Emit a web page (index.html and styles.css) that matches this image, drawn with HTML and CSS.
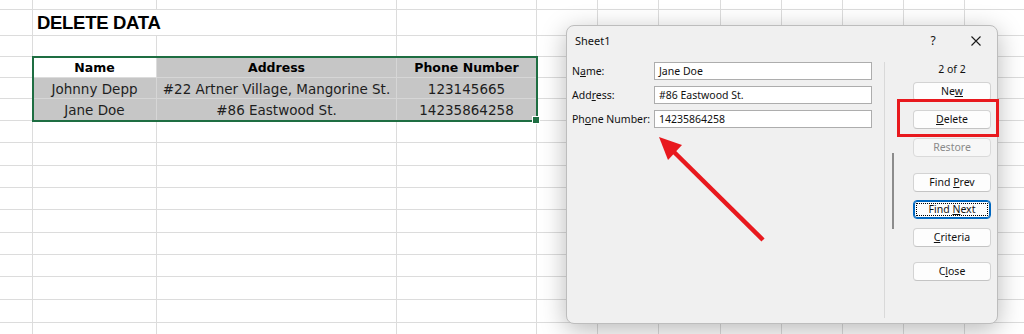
FILE: index.html
```html
<!DOCTYPE html>
<html lang="en">
<head>
<meta charset="utf-8">
<title>Delete Data</title>
<link rel="stylesheet" href="styles.css">
</head>
<body>
<div class="sheet">
  <div class="title">DELETE DATA</div>
  <div class="table">
    <div class="t active hd">Name</div><div class="t hd">Address</div><div class="t hd">Phone Number</div>
    <div class="t">Johnny Depp</div><div class="t">#22 Artner Village, Mangorine St.</div><div class="t">123145665</div>
    <div class="t">Jane Doe</div><div class="t">#86 Eastwood St.</div><div class="t">14235864258</div>
  </div>
  <!-- row 1 -->
  <span class="c"></span><span class="c"></span><span class="c"></span><span class="c"></span><span class="c"></span><span class="c"></span><span class="c"></span><span class="c"></span><span class="c"></span><span class="c"></span><span class="c"></span><span class="c"></span>
  <!-- row 2 -->
  <span class="c"></span><span class="c"></span><span class="c"></span><span class="c"></span><span class="c"></span><span class="c"></span><span class="c"></span><span class="c"></span><span class="c"></span><span class="c"></span>
  <!-- row 3 -->
  <span class="c"></span><span class="c"></span><span class="c"></span><span class="c"></span><span class="c"></span><span class="c"></span><span class="c"></span><span class="c"></span><span class="c"></span><span class="c"></span><span class="c"></span><span class="c"></span>
  <!-- rows 4-6 -->
  <span class="c"></span><span class="c"></span><span class="c"></span><span class="c"></span><span class="c"></span><span class="c"></span><span class="c"></span><span class="c"></span><span class="c"></span>
  <span class="c"></span><span class="c"></span><span class="c"></span><span class="c"></span><span class="c"></span><span class="c"></span><span class="c"></span><span class="c"></span><span class="c"></span>
  <span class="c"></span><span class="c"></span><span class="c"></span><span class="c"></span><span class="c"></span><span class="c"></span><span class="c"></span><span class="c"></span><span class="c"></span>
  <!-- rows 7-16 -->
  <span class="c"></span><span class="c"></span><span class="c"></span><span class="c"></span><span class="c"></span><span class="c"></span><span class="c"></span><span class="c"></span><span class="c"></span><span class="c"></span><span class="c"></span><span class="c"></span>
  <span class="c"></span><span class="c"></span><span class="c"></span><span class="c"></span><span class="c"></span><span class="c"></span><span class="c"></span><span class="c"></span><span class="c"></span><span class="c"></span><span class="c"></span><span class="c"></span>
  <span class="c"></span><span class="c"></span><span class="c"></span><span class="c"></span><span class="c"></span><span class="c"></span><span class="c"></span><span class="c"></span><span class="c"></span><span class="c"></span><span class="c"></span><span class="c"></span>
  <span class="c"></span><span class="c"></span><span class="c"></span><span class="c"></span><span class="c"></span><span class="c"></span><span class="c"></span><span class="c"></span><span class="c"></span><span class="c"></span><span class="c"></span><span class="c"></span>
  <span class="c"></span><span class="c"></span><span class="c"></span><span class="c"></span><span class="c"></span><span class="c"></span><span class="c"></span><span class="c"></span><span class="c"></span><span class="c"></span><span class="c"></span><span class="c"></span>
  <span class="c"></span><span class="c"></span><span class="c"></span><span class="c"></span><span class="c"></span><span class="c"></span><span class="c"></span><span class="c"></span><span class="c"></span><span class="c"></span><span class="c"></span><span class="c"></span>
  <span class="c"></span><span class="c"></span><span class="c"></span><span class="c"></span><span class="c"></span><span class="c"></span><span class="c"></span><span class="c"></span><span class="c"></span><span class="c"></span><span class="c"></span><span class="c"></span>
  <span class="c"></span><span class="c"></span><span class="c"></span><span class="c"></span><span class="c"></span><span class="c"></span><span class="c"></span><span class="c"></span><span class="c"></span><span class="c"></span><span class="c"></span><span class="c"></span>
  <span class="c"></span><span class="c"></span><span class="c"></span><span class="c"></span><span class="c"></span><span class="c"></span><span class="c"></span><span class="c"></span><span class="c"></span><span class="c"></span><span class="c"></span><span class="c"></span>
  <span class="c"></span><span class="c"></span><span class="c"></span><span class="c"></span><span class="c"></span><span class="c"></span><span class="c"></span><span class="c"></span><span class="c"></span><span class="c"></span><span class="c"></span><span class="c"></span>
</div>

<div class="dialog">
  <div class="titlebar">
    <span class="dtitle">Sheet1</span>
    <span class="help">?</span>
    <span class="xbtn"><svg width="10" height="10" viewBox="0 0 10 10"><path d="M0.5 0.5 L9.5 9.5 M9.5 0.5 L0.5 9.5" stroke="#1a1a1a" stroke-width="1.1" fill="none"/></svg></span>
  </div>
  <div class="dbody">
    <div class="fields">
      <div class="field"><span class="lbl">N<u>a</u>me:</span><span class="input">Jane Doe</span></div>
      <div class="field"><span class="lbl">Add<u>r</u>ess:</span><span class="input">#86 Eastwood St.</span></div>
      <div class="field"><span class="lbl">Ph<u>o</u>ne Number:</span><span class="input">14235864258</span></div>
    </div>
    <div class="scroll"><div class="thumb"></div></div>
    <div class="buttons">
      <div class="count">2 of 2</div>
      <span class="btn b-new">Ne<u>w</u></span>
      <span class="btn b-del"><u>D</u>elete</span>
      <span class="btn b-res disabled">Restore</span>
      <span class="btn b-prev">Find <u>P</u>rev</span>
      <span class="btn b-next focus">Find <u>N</u>ext</span>
      <span class="btn b-crit"><u>C</u>riteria</span>
      <span class="btn b-close">C<u>l</u>ose</span>
    </div>
  </div>
</div>

<div class="highlight"></div>
<svg class="arrow" width="1024" height="334" viewBox="0 0 1024 334">
  <line x1="763" y1="240" x2="672" y2="150" stroke="#e8191e" stroke-width="4.5" stroke-linecap="butt"/>
  <polygon points="659,137 682,145 668,160" fill="#e8191e"/>
</svg>
</body>
</html>
```
FILE: styles.css
```css
* { box-sizing: border-box; }
html, body { margin: 0; padding: 0; }
body {
  width: 1024px;
  height: 334px;
  overflow: hidden;
  background: #ffffff;
  position: relative;
}

/* ---------- spreadsheet ---------- */
.sheet {
  display: grid;
  grid-template-columns: 33px 124px 240px 140px 61px 61px 62px 61px 61px 61px 61px 61px;
  grid-template-rows: 10px 26px 21px 21px 21px 22px 22px 23px 22px 22px 23px 22px 22px 23px 23px 22px;
  font-family: "DejaVu Sans", sans-serif;
}
.c {
  border-right: 1px solid #dcdcdc;
  border-bottom: 1px solid #dcdcdc;
}
.title {
  grid-column: 2 / 4;
  grid-row: 2;
  border-right: 1px solid #dcdcdc;
  border-bottom: 1px solid #dcdcdc;
  font-family: "Liberation Sans", sans-serif;
  font-weight: bold;
  font-size: 18.5px;
  letter-spacing: -0.3px;
  color: #000;
  padding-left: 4px;
  display: flex;
  align-items: flex-end;
  padding-bottom: 3px;
  line-height: 18px;
}
.table {
  grid-column: 2 / 5;
  grid-row: 4 / 7;
  display: grid;
  grid-template-columns: 124px 240px 140px;
  grid-template-rows: 21px 21px 22px;
  outline: 2px solid #1e6e42;
  outline-offset: -1px;
  position: relative;
}
.table::after {
  content: "";
  position: absolute;
  right: -3px;
  bottom: -3px;
  width: 6px;
  height: 6px;
  background: #1e6e42;
  border: 1px solid #ffffff;
}
.t {
  background: #c6c6c6;
  border-right: 1px solid #d6d6d6;
  border-bottom: 1px solid #d6d6d6;
  display: flex;
  align-items: center;
  justify-content: center;
  font-size: 13.5px;
  color: #1e1e1e;
  white-space: nowrap;
  padding-top: 1px;
}
.t.hd { font-weight: bold; font-size: 12.5px; color: #000; }
.t.active { background: #ffffff; border-right-color: #dcdcdc; border-bottom-color: #dcdcdc; }

/* ---------- dialog ---------- */
.dialog {
  position: absolute;
  left: 566px;
  top: 25px;
  width: 432px;
  height: 299px;
  background: #f0f0f0;
  border: 1px solid #bdbdbd;
  border-radius: 8px;
  box-shadow: 0 6px 26px rgba(0, 0, 0, 0.28);
  font-family: "Noto Sans", sans-serif;
  font-size: 10.5px;
  color: #111;
  display: flex;
  flex-direction: column;
}
.titlebar {
  height: 29px;
  display: flex;
  align-items: center;
  padding-left: 8px;
  flex: none;
}
.dtitle { flex: 1; font-size: 11px; }
.help {
  width: 44px;
  text-align: center;
  font-size: 12px;
}
.xbtn {
  width: 42px;
  display: flex;
  justify-content: center;
  align-items: center;
}
.dbody {
  flex: 1;
  display: flex;
  padding: 7px 0 5px 5px;
}
.fields {
  width: 300px;
  display: flex;
  flex-direction: column;
  gap: 6px;
}
.field {
  display: flex;
  align-items: center;
  height: 18px;
}
.lbl { width: 82px; white-space: nowrap; }
.input {
  width: 218px;
  height: 18px;
  background: #ffffff;
  border: 1px solid #adadad;
  padding-left: 4px;
  line-height: 16px;
  white-space: nowrap;
}
.scroll {
  margin-left: 12px;
  width: 10px;
  border-left: 1px solid #d9d9d9;
  padding-top: 91px;
  padding-left: 7px;
}
.thumb {
  width: 2px;
  height: 76px;
  background: #8c8c8c;
}
.buttons {
  margin-left: 19px;
  width: 78px;
  display: flex;
  flex-direction: column;
}
.count {
  height: 14px;
  line-height: 14px;
  text-align: center;
}
.btn {
  display: block;
  height: 19px;
  line-height: 17px;
  text-align: center;
  background: #fdfdfd;
  border: 1px solid #d3d3d3;
  border-bottom-color: #c4c4c4;
  border-radius: 4px;
  white-space: nowrap;
}
.b-new { margin-top: 6px; }
.b-del { margin-top: 9px; }
.b-res { margin-top: 9px; }
.b-prev { margin-top: 16px; }
.b-next { margin-top: 8px; }
.b-crit { margin-top: 9px; }
.b-close { margin-top: 15px; }
.btn.disabled { color: #8a8a8a; background: #f7f7f7; border-color: #dadada; }
.btn.focus {
  border-color: #0067c0;
  box-shadow: inset 0 0 0 1px #0067c0;
  outline: 1px dotted #000;
  outline-offset: -4px;
}

/* ---------- annotations ---------- */
.highlight {
  position: absolute;
  left: 897px;
  top: 99px;
  width: 102px;
  height: 38px;
  border: 3px solid #e8191e;
}
.arrow {
  position: absolute;
  left: 0;
  top: 0;
  pointer-events: none;
}
```
